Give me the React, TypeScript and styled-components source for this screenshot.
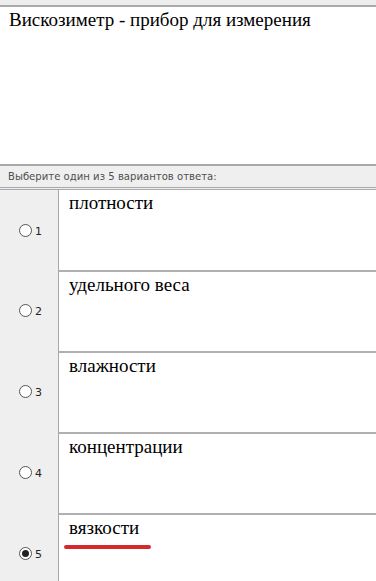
import styled, { createGlobalStyle } from "styled-components";

const GlobalStyle = createGlobalStyle`
  html, body {
    margin: 0;
    padding: 0;
    background: #ffffff;
  }
`;

const options = ["плотности", "удельного веса", "влажности", "концентрации", "вязкости"];
const selected = 4;

const App: React.FC = () => {
  return (
    <>
      <GlobalStyle />
      <Page>
        <TopStrip />
        <Question>Вискозиметр - прибор для измерения</Question>
        <Instruction>Выберите один из 5 вариантов ответа:</Instruction>
        <Options>
          {options.map((text, i) => (
            <Row key={text} $first={i === 0}>
              <RadioCell>
                <Radio $checked={i === selected} />
                <Num>{i + 1}</Num>
              </RadioCell>
              <AnswerCell $first={i === 0}>
                <AnswerText>{text}</AnswerText>
                {i === selected && <Underline />}
              </AnswerCell>
            </Row>
          ))}
        </Options>
      </Page>
    </>
  );
};

export default App;

const Page = styled.div`
  width: 376px;
  height: 581px;
  overflow: hidden;
  display: flex;
  flex-direction: column;
`;

const TopStrip = styled.div`
  height: 5px;
  flex-shrink: 0;
  background: #eeeeee;
  border-bottom: 2px solid #a9a9a9;
`;

const Question = styled.div`
  height: 157px;
  flex-shrink: 0;
  padding: 2px 9px 0;
  box-sizing: border-box;
  font-family: "Liberation Serif", serif;
  font-size: 19px;
  color: #000;
  background: #fff;
`;

const Instruction = styled.div`
  height: 26px;
  flex-shrink: 0;
  box-sizing: border-box;
  padding: 4px 8px 0;
  background: #efefef;
  border-top: 2px solid #a9a9a9;
  border-bottom: 3px double #a9a9a9;
  font-family: "DejaVu Sans", sans-serif;
  font-size: 10.1px;
  line-height: 14px;
  color: #505050;
`;

const Options = styled.div`
  display: flex;
  flex-direction: column;
  flex: 1;
  background: #efefef;
`;

const Row = styled.div<{ $first: boolean }>`
  display: grid;
  grid-template-columns: 59px 1fr;
  height: ${({ $first }) => ($first ? "80px" : "81px")};
  flex-shrink: 0;
`;

const RadioCell = styled.div`
  display: flex;
  align-items: center;
  padding-left: 19px;
  gap: 3px;
  background: #efefef;
  border-right: 1px solid #a9a9a9;
`;

const Radio = styled.span<{ $checked: boolean }>`
  width: 13px;
  height: 13px;
  box-sizing: border-box;
  border-radius: 50%;
  border: 1px solid #555;
  background: #fff;
  display: flex;
  align-items: center;
  justify-content: center;

  &::after {
    content: "";
    display: ${({ $checked }) => ($checked ? "block" : "none")};
    width: 7px;
    height: 7px;
    border-radius: 50%;
    background: #222;
  }
`;

const Num = styled.span`
  font-family: "DejaVu Sans", sans-serif;
  font-size: 11px;
  color: #222;
  margin-top: 2px;
`;

const AnswerCell = styled.div<{ $first: boolean }>`
  background: #fff;
  border-top: ${({ $first }) => ($first ? "none" : "2px solid #b0b0b0")};
  padding: 2px 10px 0;
  box-sizing: border-box;
`;

const AnswerText = styled.div`
  font-family: "Liberation Serif", serif;
  font-size: 19px;
  color: #000;
  line-height: 22px;
`;

const Underline = styled.div`
  width: 87px;
  height: 4px;
  margin: 6px 0 0 -5px;
  border-radius: 2px;
  background: #d42a2e;
`;
